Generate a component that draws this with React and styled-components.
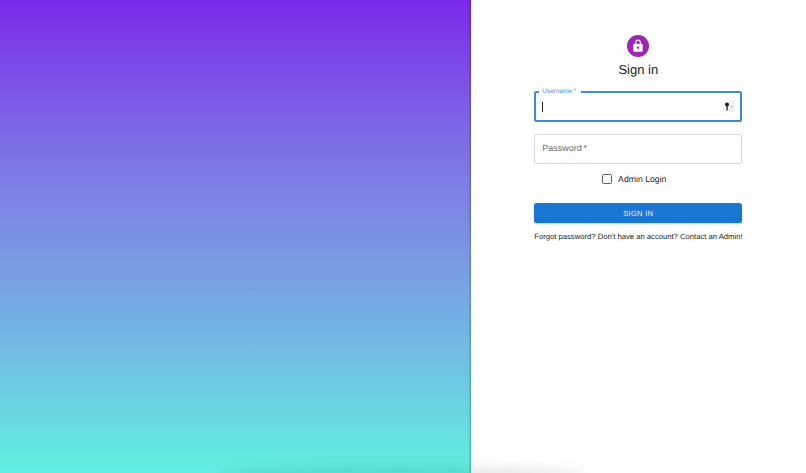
import React from "react";
import styled, { createGlobalStyle } from "styled-components";

const Global = createGlobalStyle`
  html, body { margin: 0; padding: 0; height: 100%; background: #fff; }
  #root { height: 100%; }
  * { box-sizing: border-box; }
`;

const Page = styled.div`
  position: relative;
  display: flex;
  width: 806px;
  height: 473px;
  overflow: hidden;
  font-family: "Liberation Sans", Arial, sans-serif;
  text-rendering: geometricPrecision;
`;

const Hero = styled.div`
  width: 470.5px;
  flex: none;
  background: linear-gradient(180deg, #7a2ae9 0%, #7d63e6 25%, #7c8ee4 48%, #72b8e3 72%, #62f0e0 100%);
`;

const Panel = styled.main`
  position: relative;
  flex: 1;
  display: flex;
  flex-direction: column;
  align-items: center;
  padding-top: 35px;
  background: #fff;
  box-shadow: -1px 0 2px rgba(0, 0, 0, 0.25);
`;

const BottomShade = styled.div`
  position: absolute;
  left: 215px;
  width: 370px;
  bottom: -8px;
  height: 14px;
  border-radius: 50%;
  background: rgba(0, 0, 0, 0.1);
  filter: blur(6px);
`;

const Avatar = styled.div`
  width: 22px;
  height: 22px;
  border-radius: 50%;
  background: #9c27b0;
  display: flex;
  align-items: center;
  justify-content: center;
`;

const Title = styled.h1`
  margin: 4px 0 0;
  font-size: 13px;
  line-height: 18px;
  font-weight: 400;
  color: #1c1c1c;
`;

const Form = styled.form`
  width: 208px;
  margin-top: 12px;
  display: flex;
  flex-direction: column;
`;

const Field = styled.div`
  position: relative;
  height: ${p => (p.$focused ? 31 : 30)}px;
  margin-bottom: 12px;
  padding: 0 ${p => (p.$focused ? 6 : 7)}px;
  display: flex;
  align-items: center;
  justify-content: space-between;
  border-radius: 2.5px;
  border: ${p => (p.$focused ? "2px solid #3f8ad4" : "1px solid #d9d9d9")};
`;

const FloatLabel = styled.span`
  position: absolute;
  top: -5px;
  left: 3px;
  padding: 0 5px 0 3px;
  background: #fff;
  font-size: 6.5px;
  line-height: 7px;
  color: #4a8fd6;
`;

const Caret = styled.span`
  width: 1px;
  height: 10px;
  background: #222;
`;

const Placeholder = styled.span`
  font-size: 9px;
  color: #6b6b6b;
  margin-top: -2px;
`;

const KeyBadge = styled.span`
  display: flex;
  align-items: center;
  justify-content: center;
  width: 12px;
  height: 11px;
  margin-right: -1px;
  border-radius: 2px;
  background: #f3f3f3;
`;

const CheckRow = styled.label`
  display: flex;
  align-items: center;
  justify-content: center;
  gap: 6px;
  height: 15px;
  margin-top: -5px;
  padding-right: 8px;
  font-size: 8.7px;
  color: #262626;
`;

const Box = styled.span`
  width: 10px;
  height: 10px;
  border: 1.2px solid #5f5f5f;
  border-radius: 1.5px;
`;

const Submit = styled.button`
  margin-top: 17px;
  height: 20px;
  border: 0;
  border-radius: 2.5px;
  background: #1976d2;
  color: #e8f1fb;
  font: 400 7.6px "Liberation Sans", Arial, sans-serif;
  text-rendering: geometricPrecision;
  letter-spacing: 0.25px;
  box-shadow: 0 1px 2px rgba(0, 0, 0, 0.2);
`;

const Links = styled.p`
  margin: 9px 0 0;
  font-size: 7.67px;
  line-height: 10px;
  color: #222;
  white-space: nowrap;
`;

const LockIcon = () => (
  <svg width="14" height="14" viewBox="0 0 24 24" fill="#fff">
    <path d="M18 8h-1V6c0-2.76-2.24-5-5-5S7 3.24 7 6v2H6c-1.1 0-2 .9-2 2v10c0 1.1.9 2 2 2h12c1.1 0 2-.9 2-2V10c0-1.1-.9-2-2-2zm-6 9c-1.1 0-2-.9-2-2s.9-2 2-2 2 .9 2 2-.9 2-2 2zm3.1-9H8.9V6c0-1.71 1.39-3.1 3.1-3.1 1.71 0 3.1 1.39 3.1 3.1v2z" />
  </svg>
);

const KeyIcon = () => (
  <svg width="10" height="9" viewBox="0 0 10 9">
    <circle cx="3" cy="2.4" r="2" fill="#222" />
    <rect x="2.4" y="3.5" width="1.3" height="5" fill="#222" />
    <path d="M6.6 4.2 L7.7 5.2 L8.8 4.2" fill="none" stroke="#777" strokeWidth="0.7" />
  </svg>
);

export default function App() {
  return (
    <Page>
      <Global />
      <Hero />
      <Panel>
        <Avatar><LockIcon /></Avatar>
        <Title>Sign in</Title>
        <Form>
          <Field $focused>
            <FloatLabel>Username{"\u2009"}*</FloatLabel>
            <Caret />
            <KeyBadge><KeyIcon /></KeyBadge>
          </Field>
          <Field>
            <Placeholder>Password{"\u2009"}*</Placeholder>
          </Field>
          <CheckRow><Box />Admin Login</CheckRow>
          <Submit type="button">SIGN IN</Submit>
          <Links>Forgot password? Don't have an account? Contact an Admin!</Links>
        </Form>
      </Panel>
      <BottomShade />
    </Page>
  );
}
